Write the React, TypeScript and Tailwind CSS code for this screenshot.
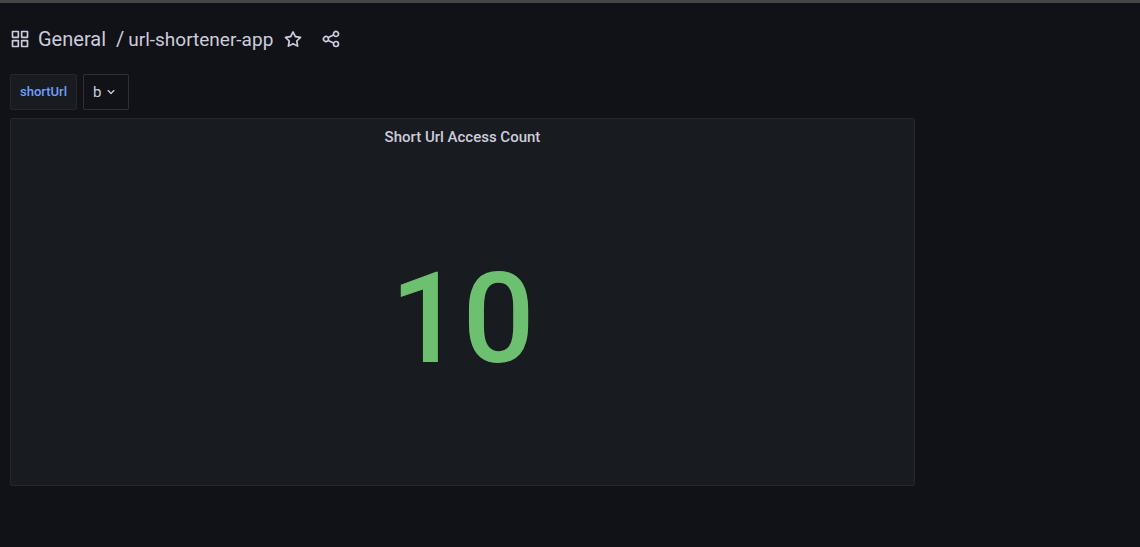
import { useState } from 'react';

const ICONS = {
  apps: 'M10,13H3a1,1,0,0,0-1,1v7a1,1,0,0,0,1,1h7a1,1,0,0,0,1-1V14A1,1,0,0,0,10,13ZM9,20H4V15H9ZM21,2H14a1,1,0,0,0-1,1v7a1,1,0,0,0,1,1h7a1,1,0,0,0,1-1V3A1,1,0,0,0,21,2ZM20,9H15V4h5Zm1,4H14a1,1,0,0,0-1,1v7a1,1,0,0,0,1,1h7a1,1,0,0,0,1-1V14A1,1,0,0,0,21,13Zm-1,7H15V15h5ZM10,2H3A1,1,0,0,0,2,3v7a1,1,0,0,0,1,1h7a1,1,0,0,0,1-1V3A1,1,0,0,0,10,2ZM9,9H4V4H9Z',
  star: 'M22,9.67A1,1,0,0,0,21.14,9l-5.69-.83L12.9,3a1,1,0,0,0-1.8,0L8.55,8.16,2.86,9a1,1,0,0,0-.81.68,1,1,0,0,0,.25,1l4.13,4-1,5.68A1,1,0,0,0,6.9,21.44L12,18.77l5.1,2.67a.93.93,0,0,0,.46.12,1,1,0,0,0,.59-.19,1,1,0,0,0,.4-1l-1-5.68,4.13-4A1,1,0,0,0,22,9.67Zm-6.15,4a1,1,0,0,0-.29.88l.72,4.2-3.76-2a1.06,1.06,0,0,0-.94,0l-3.76,2,.72-4.2a1,1,0,0,0-.29-.88l-3-3,4.21-.61a1,1,0,0,0,.76-.55L12,5.7l1.88,3.82a1,1,0,0,0,.76.55l4.21.61Z',
  share: 'M18,14a4,4,0,0,0-3.08,1.48l-5.1-2.35a3.64,3.64,0,0,0,0-2.26l5.1-2.35A4,4,0,1,0,14,6a4.17,4.17,0,0,0,.07.71L8.79,9.14a4,4,0,1,0,0,5.72l5.28,2.43A4.17,4.17,0,0,0,14,18a4,4,0,1,0,4-4ZM18,4a2,2,0,1,1-2,2A2,2,0,0,1,18,4ZM6,14a2,2,0,1,1,2-2A2,2,0,0,1,6,14Zm12,6a2,2,0,1,1,2-2A2,2,0,0,1,18,20Z',
  angleDown: 'M17,9.17a1,1,0,0,0-1.41,0L12,12.71,8.46,9.17a1,1,0,0,0-1.41,0,1,1,0,0,0,0,1.42l4.24,4.24a1,1,0,0,0,1.42,0L17,10.59A1,1,0,0,0,17,9.17Z',
};

function Icon({ name, className }: { name: keyof typeof ICONS; className: string }) {
  return (
    <svg viewBox="0 0 24 24" fill="currentColor" aria-hidden="true" className={className}>
      <path d={ICONS[name]} />
    </svg>
  );
}

function Toolbar() {
  const [starred, setStarred] = useState(false);
  return (
    <header className="flex items-center">
      <Icon name="apps" className="size-5 shrink-0" />
      <h1 className="ml-2 flex h-7 items-baseline gap-2.5 text-xl leading-7 whitespace-nowrap">
        <a href="#general">General</a>
        <span className="flex items-baseline gap-1">
          <span>/</span>
          <a href="#dashboard" className="text-[19px] leading-7">
            url-shortener-app
          </a>
        </span>
      </h1>
      <button
        type="button"
        aria-label="Mark as favorite"
        aria-pressed={starred}
        onClick={() => setStarred(!starred)}
        className="ml-2.5"
      >
        <Icon name="star" className="size-5" />
      </button>
      <button type="button" aria-label="Share dashboard" className="ml-[18px]">
        <Icon name="share" className="size-5" />
      </button>
    </header>
  );
}

function Variables() {
  return (
    <div className="mt-[21px] flex gap-1.5">
      <label
        htmlFor="short-url"
        className="flex h-9 items-center rounded-xs border border-[#25272c] bg-[#181b1f] px-[9px] text-[13px] font-medium text-[#6e9fff]"
      >
        shortUrl
      </label>
      <div className="relative flex h-9">
        <select
          id="short-url"
          defaultValue="b"
          className="appearance-none rounded-xs border border-[#2e3036] bg-[#111217] pr-[26px] pl-[9px] text-[15px]"
        >
          <option value="b">b</option>
        </select>
        <Icon
          name="angleDown"
          className="pointer-events-none absolute top-2.5 right-2.5 size-4"
        />
      </div>
    </div>
  );
}

function StatPanel({ title, value }: { title: string; value: number }) {
  return (
    <section className="mt-2 flex h-92 w-[80.8%] flex-col rounded-xs border border-[#25272c] bg-[#181b1f]">
      <h2 className="pt-1.5 text-center text-[15px] leading-6 font-medium">{title}</h2>
      <div className="flex flex-1 items-center justify-center pt-0.5 text-[127px] leading-none font-medium text-[#6ec071]">
        {value}
      </div>
    </section>
  );
}

export default function App() {
  return (
    <main className="min-h-screen border-t-3 border-[#464646] bg-[#111217] px-2.5 pt-[22px] font-[Roboto,sans-serif] text-[#ccccdc]">
      <Toolbar />
      <Variables />
      <StatPanel title="Short Url Access Count" value={10} />
    </main>
  );
}
